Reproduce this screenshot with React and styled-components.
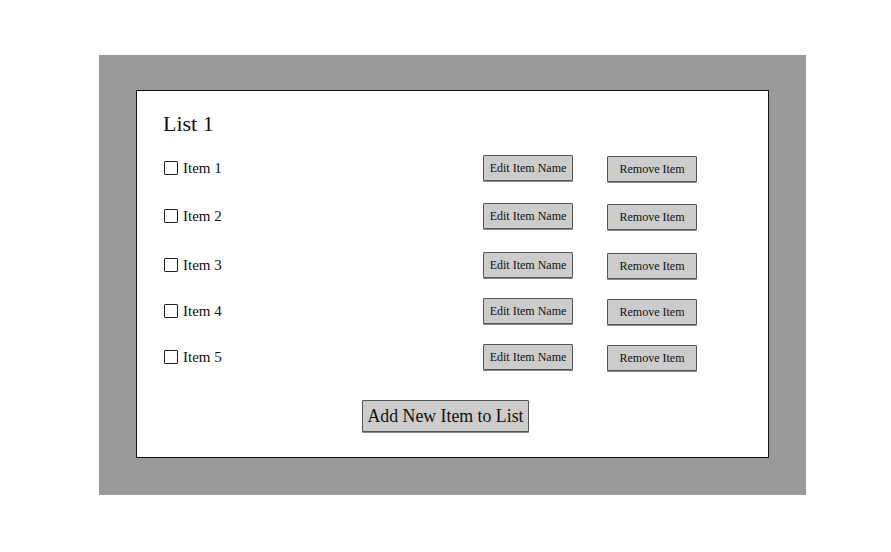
import React from "react";
import styled, { createGlobalStyle } from "styled-components";

const items = [
  { name: "Item 1", top: 19 },
  { name: "Item 2", top: 22 },
  { name: "Item 3", top: 23 },
  { name: "Item 4", top: 20 },
  { name: "Item 5", top: 20 },
];

function App() {
  return (
    <>
      <GlobalStyle />
      <Panel>
        <Card>
          <Title>List 1</Title>
          {items.map((item) => (
            <Row key={item.name} $top={item.top}>
              <Label>
                <Box />
                {item.name}
              </Label>
              <SmallButton>Edit Item Name</SmallButton>
              <SmallButton $shift>Remove Item</SmallButton>
            </Row>
          ))}
          <AddButton>Add New Item to List</AddButton>
        </Card>
      </Panel>
    </>
  );
}

const GlobalStyle = createGlobalStyle`
  body {
    margin: 0;
    background: #fff;
    font-family: "Liberation Serif", "Times New Roman", serif;
    color: #111;
  }
`;

const Panel = styled.div`
  box-sizing: border-box;
  margin: 55px 0 0 99px;
  width: 707px;
  height: 440px;
  padding: 35px 37px 37px;
  background: #999999;
`;

const Card = styled.div`
  box-sizing: border-box;
  height: 368px;
  padding: 20px 26px 0;
  background: #fff;
  border: 1px solid #111;
  display: flex;
  flex-direction: column;
`;

const Title = styled.div`
  font-size: 22px;
  line-height: 25px;
  height: 25px;
`;

const Row = styled.div`
  display: grid;
  grid-template-columns: 286px 90px 90px;
  column-gap: 34px;
  align-items: center;
  height: 26px;
  margin-top: ${({ $top }) => $top}px;
`;

const Label = styled.div`
  display: flex;
  align-items: center;
  font-size: 15px;
  padding-left: 1px;
`;

const Box = styled.span`
  box-sizing: border-box;
  width: 14px;
  height: 14px;
  border: 1px solid #222;
  border-radius: 1px;
  margin-right: 5px;
`;

const SmallButton = styled.div`
  box-sizing: border-box;
  height: 26px;
  display: flex;
  align-items: center;
  justify-content: center;
  font-size: 12px;
  color: #111;
  background: #cccccc;
  border: 1px solid #555;
  border-radius: 1px;
  box-shadow: 0 1px 0 #888;
  transform: translateY(${({ $shift }) => ($shift ? 1 : 0)}px);
`;

const AddButton = styled.div`
  box-sizing: border-box;
  align-self: flex-start;
  margin: 30px 0 0 199px;
  width: 167px;
  height: 32px;
  display: flex;
  align-items: center;
  justify-content: center;
  font-size: 17.8px;
  color: #111;
  background: #cccccc;
  border: 1px solid #555;
  border-radius: 1px;
  box-shadow: 0 1px 0 #888;
`;

export default App;
